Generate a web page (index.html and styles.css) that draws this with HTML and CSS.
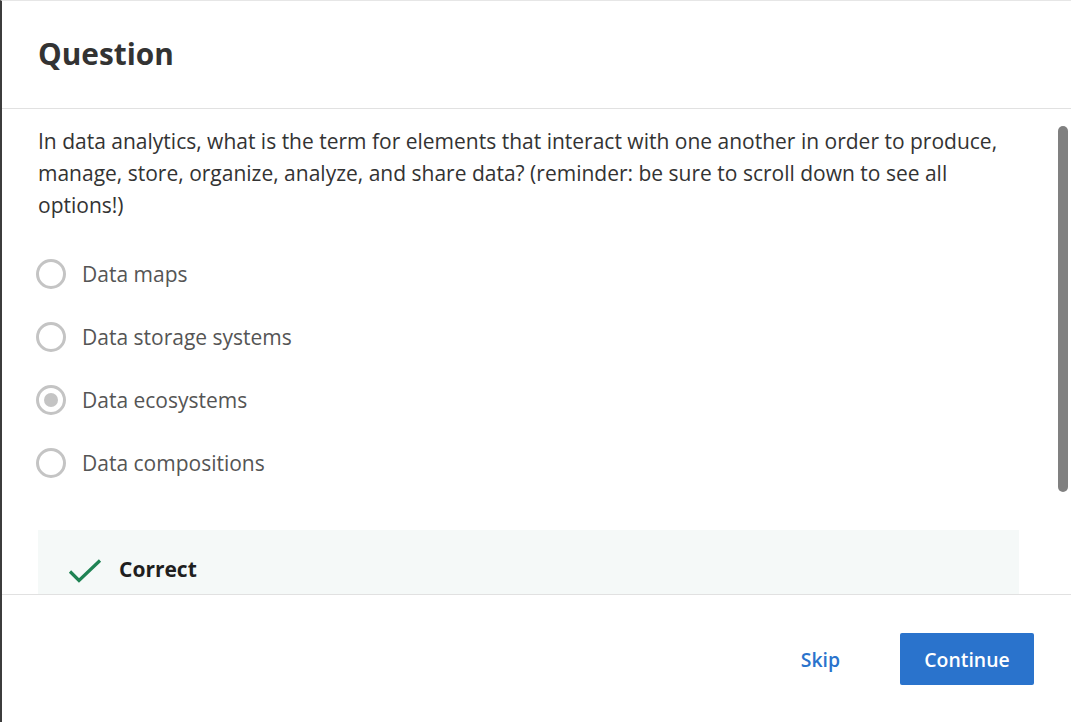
FILE: index.html
```html
<!DOCTYPE html>
<html lang="en">
<head>
<meta charset="utf-8">
<title>Question</title>
<link rel="stylesheet" href="styles.css">
</head>
<body>
<div class="dialog">
  <header class="dialog-header">
    <h1 class="dialog-title">Question</h1>
  </header>
  <main class="dialog-body">
    <div class="scroll-content">
      <p class="prompt">In data analytics, what is the term for elements that interact with one another in order to produce, manage, store, organize, analyze, and share data? (reminder: be sure to scroll down to see all options!)</p>
      <ul class="options">
        <li class="option"><span class="radio"></span><span class="option-label">Data maps</span></li>
        <li class="option"><span class="radio"></span><span class="option-label">Data storage systems</span></li>
        <li class="option"><span class="radio radio-checked"></span><span class="option-label">Data ecosystems</span></li>
        <li class="option"><span class="radio"></span><span class="option-label">Data compositions</span></li>
      </ul>
      <section class="feedback">
        <div class="feedback-head">
          <svg class="check" width="34" height="26" viewBox="0 0 34 26" aria-hidden="true"><path d="M2 13.5 L11 22.5 L32 2.5" fill="none" stroke="#1f8354" stroke-width="3.2"/></svg>
          <span class="feedback-title">Correct</span>
        </div>
        <p class="feedback-text">The term for elements that interact with one another in order to produce, manage, store, organize, analyze, and share data is data ecosystems.</p>
      </section>
    </div>
    <div class="scroll-thumb"></div>
  </main>
  <footer class="dialog-footer">
    <button class="btn btn-link">Skip</button>
    <button class="btn btn-primary">Continue</button>
  </footer>
</div>
</body>
</html>
```
FILE: styles.css
```css
html, body {
  margin: 0;
  padding: 0;
  background: #ffffff;
}
body {
  font-family: "Open Sans", "Noto Sans", sans-serif;
  color: #333333;
}
.dialog {
  box-sizing: border-box;
  width: 1071px;
  height: 722px;
  border-top: 1px solid #e6e6e6;
  border-left: 2px solid #3c3c3c;
  display: flex;
  flex-direction: column;
  overflow: hidden;
}
.dialog-header {
  height: 107px;
  border-bottom: 1px solid #e1e1e1;
  padding-left: 36px;
  display: flex;
  align-items: center;
}
.dialog-title {
  margin: 0;
  font-size: 29.8px;
  font-weight: 700;
  color: #333333;
  line-height: 36px;
  padding-bottom: 1px;
}
.dialog-body {
  position: relative;
  height: 485px;
  overflow: hidden;
}
.scroll-content {
  padding: 16px 52px 0 36px;
}
.prompt {
  margin: 0;
  font-size: 21px;
  line-height: 32px;
  color: #333333;
}
.options {
  list-style: none;
  margin: 38px 0 0;
  padding: 0;
  display: flex;
  flex-direction: column;
  gap: 33px;
}
.option {
  display: flex;
  align-items: center;
  height: 30px;
}
.radio {
  box-sizing: border-box;
  width: 30px;
  height: 30px;
  border: 3px solid #c4c4c4;
  border-radius: 50%;
  margin-left: -2px;
  margin-right: 16px;
  display: flex;
  align-items: center;
  justify-content: center;
  flex: none;
}
.radio-checked::after {
  content: "";
  width: 14px;
  height: 14px;
  border-radius: 50%;
  background: #c4c4c4;
}
.option-label {
  font-size: 21px;
  line-height: 30px;
  color: #555555;
}
.feedback {
  margin-top: 52px;
  background: #f5f9f8;
  padding: 23px 30px 30px 30px;
}
.feedback-head {
  display: flex;
  align-items: center;
  height: 32px;
}
.check {
  flex: none;
  margin-right: 17px;
  margin-top: 4px;
}
.feedback-title {
  font-size: 21px;
  font-weight: 700;
  color: #1f1f1f;
  line-height: 32px;
}
.feedback-text {
  margin: 3px 0 0 0;
  font-size: 21px;
  line-height: 32px;
  color: #333333;
  padding-left: 51px;
}
.scroll-thumb {
  position: absolute;
  top: 17px;
  right: 3px;
  width: 10px;
  height: 366px;
  border-radius: 5px;
  background: #808080;
}
.dialog-footer {
  flex: 1;
  border-top: 1px solid #e1e1e1;
  display: flex;
  justify-content: flex-end;
  align-items: flex-start;
  padding: 38px 37px 0 0;
  gap: 36px;
}
.btn {
  font-family: "Open Sans", "Noto Sans", sans-serif;
  font-size: 19.4px;
  font-weight: 600;
  height: 52px;
  border-radius: 2px;
  cursor: pointer;
}
.btn-link {
  background: transparent;
  border: none;
  color: #2a73cc;
  padding: 0 24px;
}
.btn-primary {
  width: 134px;
  background: #2a73cc;
  border: none;
  color: #ffffff;
  padding: 0;
}
```
